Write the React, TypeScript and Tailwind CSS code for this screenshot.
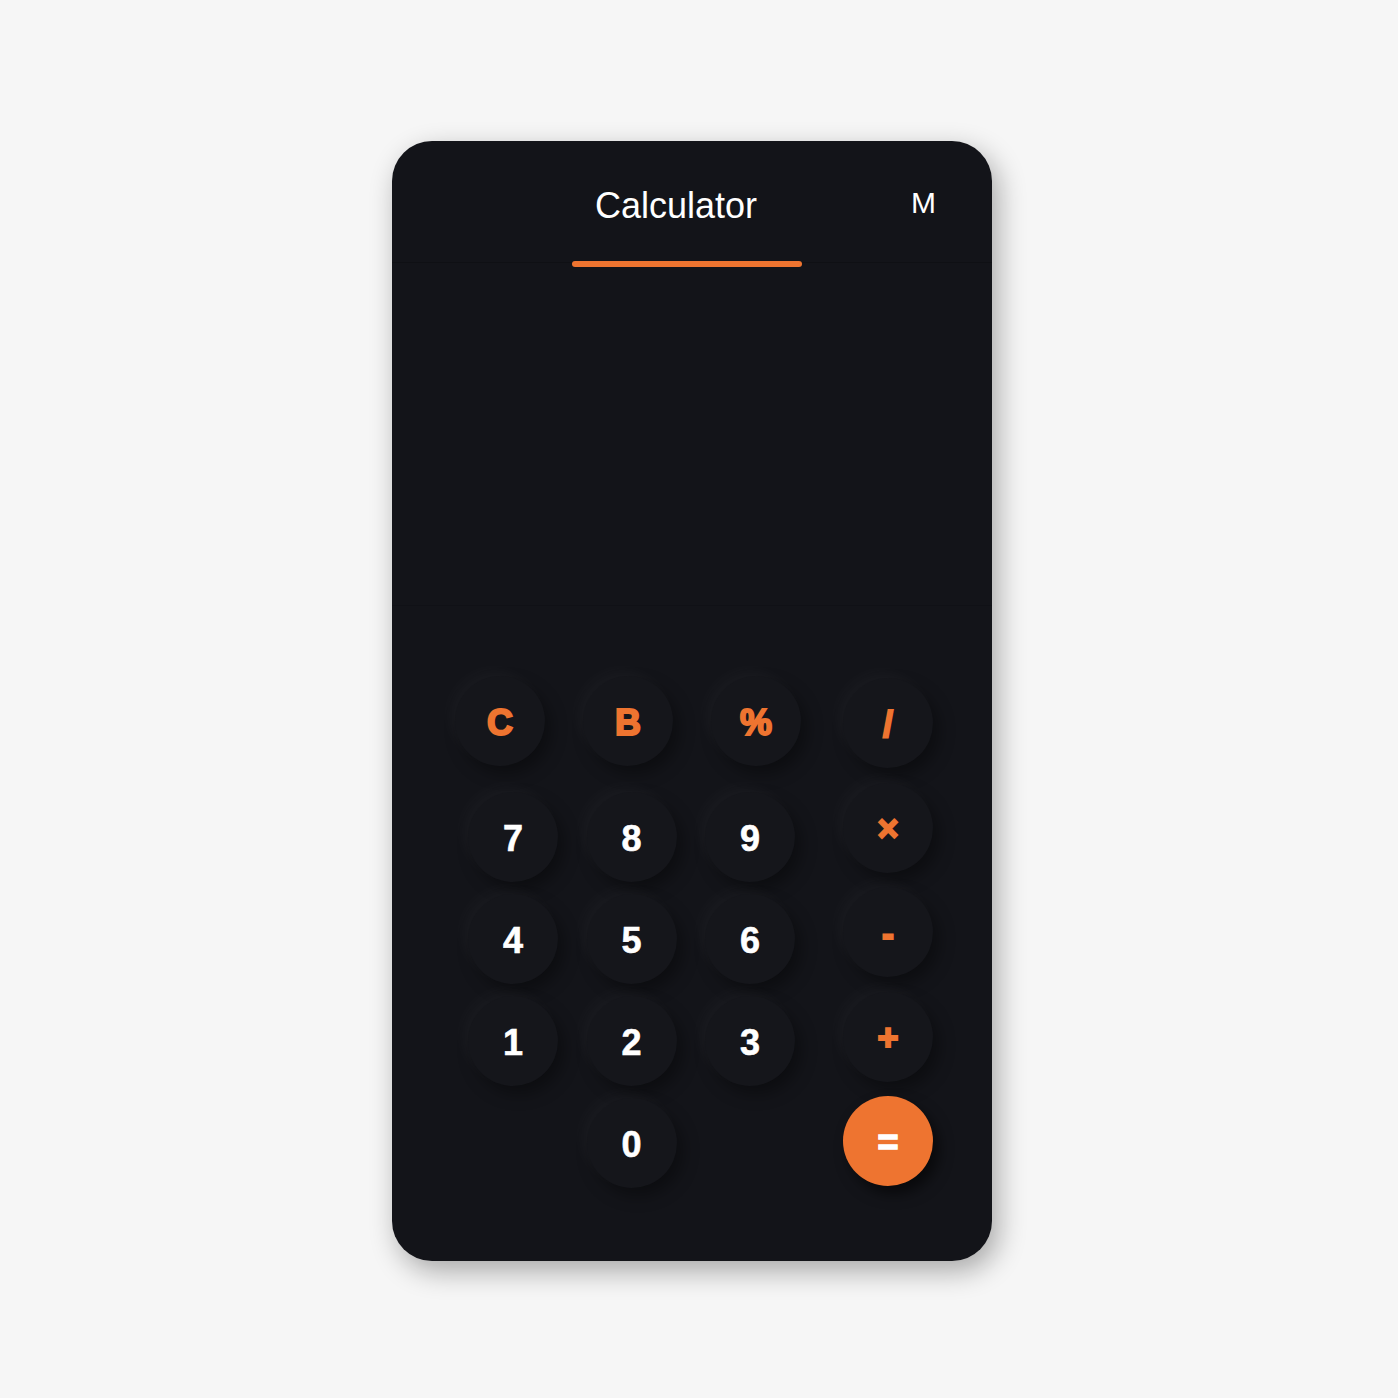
import React from "react";

const ff = { fontFamily: '"Liberation Sans", Arial, sans-serif' };

function Key({
  label,
  kind = "num",
}: {
  label: string;
  kind?: "num" | "op" | "eq";
}) {
  const base =
    "w-[90px] h-[90px] pt-[3px] rounded-full flex items-center justify-center select-none text-[36px] leading-[36px] font-bold";
  if (kind === "eq") {
    return (
      <div
        className={`${base} bg-[#ee7430] text-white [-webkit-text-stroke:1.5px_#ffffff] shadow-[6px_8px_14px_rgba(0,0,0,0.55)]`}
      >
        {label}
      </div>
    );
  }
  return (
    <div
      className={`${base} bg-[#15161b] shadow-[-6px_-6px_14px_rgba(255,255,255,0.03),6px_8px_16px_rgba(0,0,0,0.35)] ${
        kind === "op"
          ? "text-[#ee7430] [-webkit-text-stroke:2px_#ee7430]"
          : "text-white [-webkit-text-stroke:0.6px_#ffffff]"
      }`}
    >
      {label}
    </div>
  );
}

export default function App() {
  return (
    <div
      className="min-h-[1398px] w-full bg-[#f6f6f6] pt-[141px] pl-[392px]"
      style={ff}
    >
      <div className="w-[600px] h-[1120px] rounded-[40px] bg-[#131419] shadow-[6px_10px_28px_rgba(0,0,0,0.32)] flex flex-col overflow-hidden">
        {/* Header */}
        <div className="h-[122px] border-b border-[#0f1014] pt-[47px] pl-[180px] flex items-start shrink-0">
          <div className="w-[230px] flex flex-col">
            <div className="ml-[23px] text-[36px] leading-[36px] text-white">
              Calculator
            </div>
            <div className="mt-[37px] h-[6px] w-[230px] rounded-full bg-[#ee7430] relative z-10" />
          </div>
          <div className="ml-[109px] mt-[0px] text-[30px] leading-[30px] text-white">
            M
          </div>
        </div>

        {/* Display */}
        <div className="h-[343px] border-b border-[#101116] shrink-0" />

        {/* Keypad */}
        <div className="pt-[70px] pl-[63px] flex items-start">
          <div className="flex flex-col w-[346px]">
            <div className="flex gap-[38px]">
              <Key label="C" kind="op" />
              <Key label="B" kind="op" />
              <Key label="%" kind="op" />
            </div>
            <div className="mt-[26px] ml-[13px] grid grid-cols-[90px_90px_90px] gap-x-[28.5px] gap-y-[12px]">
              <Key label="7" />
              <Key label="8" />
              <Key label="9" />
              <Key label="4" />
              <Key label="5" />
              <Key label="6" />
              <Key label="1" />
              <Key label="2" />
              <Key label="3" />
              <div />
              <Key label="0" />
              <div />
            </div>
          </div>
          <div className="ml-[42px] mt-[2px] flex flex-col gap-[14.5px]">
            <Key label="/" kind="op" />
            <Key label="×" kind="op" />
            <Key label="-" kind="op" />
            <Key label="+" kind="op" />
            <Key label="=" kind="eq" />
          </div>
        </div>
      </div>
    </div>
  );
}
